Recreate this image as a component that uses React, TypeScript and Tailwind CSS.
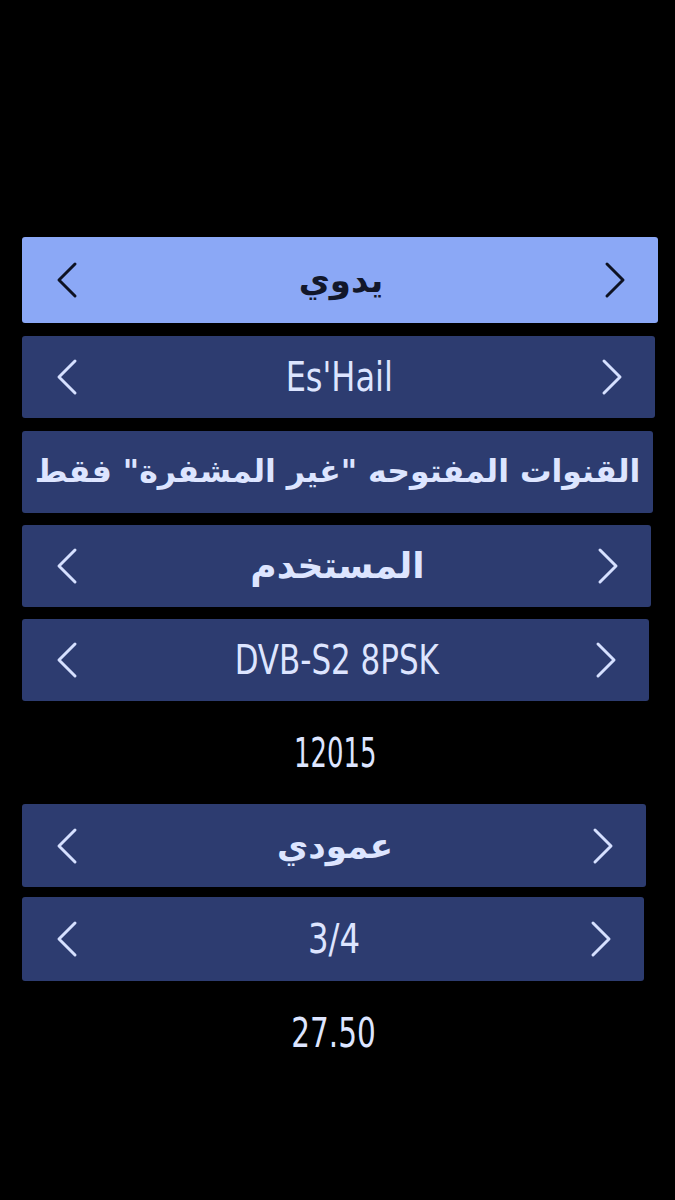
import React from "react";

const Chevron = ({ dir, color }: { dir: "left" | "right"; color: string }) => (
  <svg width="26" height="38" viewBox="0 0 26 38" fill="none" aria-hidden="true">
    {dir === "left" ? (
      <polyline points="21,3 5,19 21,35" stroke={color} strokeWidth="3" strokeLinecap="round" strokeLinejoin="round" />
    ) : (
      <polyline points="5,3 21,19 5,35" stroke={color} strokeWidth="3" strokeLinecap="round" strokeLinejoin="round" />
    )}
  </svg>
);

const latin = { fontFamily: '"DejaVu Sans Condensed", "DejaVu Sans", Roboto, sans-serif' };
const arabic = { fontFamily: '"DejaVu Sans", "Noto Sans", sans-serif' };

type Row = {
  text: string;
  ar?: boolean;
  active?: boolean;
  arrows?: boolean;
  cls: string;
  size: string;
};

const Option = ({ r }: { r: Row }) => (
  <div
    className={`${r.cls} flex items-center rounded-[3px] ${
      r.active ? "bg-[#8ba8f6]" : "bg-[#2d3c70]"
    } ${r.arrows === false ? "px-[10px] justify-center" : "justify-between pl-[32px] pr-[30px]"}`}
  >
    {r.arrows !== false && <Chevron dir="left" color={r.active ? "#0e1222" : "#d6e0ff"} />}
    <span
      dir={r.ar ? "rtl" : "ltr"}
      className={`${r.size} inline-block whitespace-nowrap leading-none ${
        r.active ? "text-[#12172a]" : "text-[#dde5ff]"
      } ${r.ar ? "font-bold" : "font-normal"}`}
      style={r.ar ? arabic : latin}
    >
      {r.text}
    </span>
    {r.arrows !== false && <Chevron dir="right" color={r.active ? "#0e1222" : "#d6e0ff"} />}
  </div>
);

export default function App() {
  return (
    <div className="w-[675px] h-[1200px] bg-black overflow-hidden">
      <div className="flex flex-col pl-[22px] pt-[237px]">
        <Option r={{ text: "يدوي", ar: true, active: true, cls: "w-[636px] h-[86px]", size: "text-[34px]" }} />
        <div className="h-[13px]" />
        <Option r={{ text: "Es'Hail", cls: "w-[633px] h-[82px]", size: "text-[40px] scale-x-[0.89]" }} />
        <div className="h-[13px]" />
        <Option
          r={{
            text: "القنوات المفتوحه \"غير المشفرة\" فقط",
            ar: true,
            arrows: false,
            cls: "w-[631px] h-[82px]",
            size: "text-[31.5px]",
          }}
        />
        <div className="h-[12px]" />
        <Option r={{ text: "المستخدم", ar: true, cls: "w-[629px] h-[82px]", size: "text-[36px]" }} />
        <div className="h-[12px]" />
        <Option r={{ text: "DVB-S2 8PSK", cls: "w-[627px] h-[82px]", size: "text-[40px] scale-x-[0.86]" }} />
        <div className="h-[103px] w-[627px] flex items-center justify-center">
          <span className="inline-block text-[40px] leading-none text-[#dde5ff] scale-x-[0.72]" style={latin}>12015</span>
        </div>
        <Option r={{ text: "عمودي", ar: true, cls: "w-[624px] h-[83px]", size: "text-[34px]" }} />
        <div className="h-[10px]" />
        <Option r={{ text: "3/4", cls: "w-[622px] h-[84px]", size: "text-[40px] scale-x-[0.9]" }} />
        <div className="h-[104px] w-[622px] flex items-center justify-center">
          <span className="inline-block text-[40px] leading-none text-[#dde5ff] scale-x-[0.82]" style={latin}>27.50</span>
        </div>
      </div>
    </div>
  );
}
